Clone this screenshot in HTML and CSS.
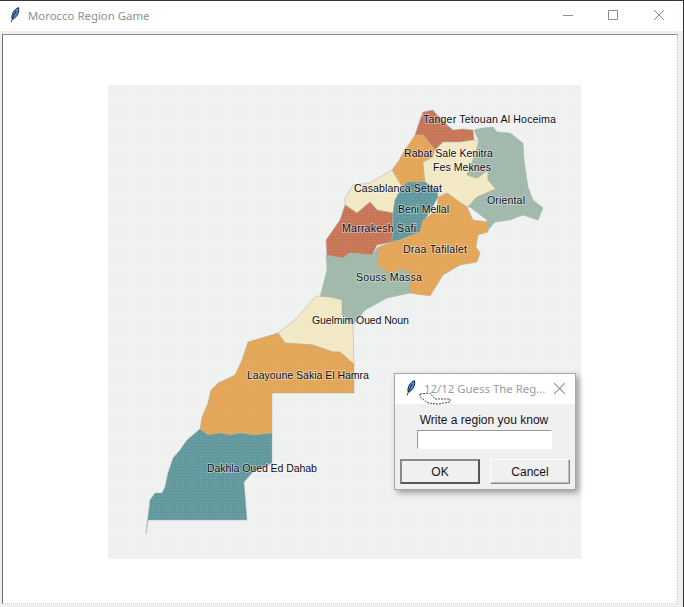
FILE: index.html
```html
<!DOCTYPE html>
<html lang="en">
<head>
<meta charset="utf-8">
<title>Morocco Region Game</title>
<link rel="stylesheet" href="styles.css">
</head>
<body>
<div class="window">
  <header class="titlebar">
    <svg class="feather" viewBox="0 0 10 16" width="10" height="16">
      <path class="feather-body" d="M2 11.5 C1.5 7 4 2.5 8.5 .6 C9.5 4 7.5 9.5 3.4 12 Z"/>
      <path class="feather-line" d="M1.2 15.4 L2.6 11 L6.2 4"/>
    </svg>
    <span class="title">Morocco Region Game</span>
    <div class="controls">
      <svg class="ctl" viewBox="0 0 10 10" width="10" height="10"><path d="M0 5.5H10"/></svg>
      <svg class="ctl" viewBox="0 0 10 10" width="10" height="10"><path d="M.5 .5H9.5V9.5H.5Z"/></svg>
      <svg class="ctl ctl-close" viewBox="0 0 10 10" width="10" height="10"><path d="M0 0L10 10M10 0L0 10"/></svg>
    </div>
  </header>
  <main class="canvas">
    <svg class="map" viewBox="108 85 473 474" width="473" height="474">
      <defs>
        <pattern id="dither" x="0" y="0" width="3" height="3" patternUnits="userSpaceOnUse">
          <rect class="dither-dot" x="0" y="0" width="1" height="1"/>
          <rect class="dither-dot" x="2" y="1" width="1" height="1"/>
        </pattern>
      </defs>
      <rect class="sea" x="108" y="85" width="473" height="474"/>
      <g class="regions">
        <path class="terra" d="M423 112L433 110L437 115L440 117L447 125L453 130L462 129L473 130L474 140L460 142L443 142L435 150L423 135L415 135L420 120Z"/>
        <path class="orange" d="M415 135L423 135L435 150L433 157L423 162L425 170L427 182L415 182L408 182L402 187L392 170L398 162L403 153Z"/>
        <path class="cream" d="M435 150L443 142L460 142L474 140L479 141L475 155L467 175L477 178L488 170L488 180L496 189L477 197L468 207L460 203L447 193L438 197L437 190L425 182L423 162L433 157Z"/>
        <path class="sage" d="M474 130L483 128L493 127L497 132L510 133L523 143L524 160L528 187L533 200L543 208L538 220L523 215L510 220L495 222L488 230L487 220L470 207L468 207L477 197L496 189L488 180L488 170L477 178L467 175L475 155L479 141Z"/>
        <path class="cream" d="M345 198L353 185L370 183L392 170L402 187L395 200L393 213L377 210L370 202L357 213L345 205Z"/>
        <path class="terra" d="M345 205L357 213L370 202L377 210L393 213L392 242L377 245L372 255L350 253L343 258L327 257L326 240L333 230L340 220Z"/>
        <path class="teal" d="M393 213L395 200L402 187L408 182L425 182L437 190L438 197L431 210L423 222L420 232L400 240L392 242Z"/>
        <path class="orange" d="M423 220L437 210L438 198L447 193L467 207L473 220L488 222L488 232L478 235L476 247L480 253L477 262L460 265L443 275L430 296L410 293L410 280L407 270L390 273L378 267L378 247L392 242L400 240L420 232Z"/>
        <path class="sage" d="M326 255L343 258L350 253L372 255L378 247L378 267L390 273L407 269L410 280L410 293L387 298L365 310L353 325L342 315L342 300L330 297L320 297L327 270Z"/>
        <path class="cream" d="M316 296L330 297L342 300L342 315L353 325L354 365L340 352L333 352L313 345L285 343L278 333L295 320Z"/>
        <path class="orange" d="M278 333L285 343L313 345L333 352L340 352L354 364L354 393L272 393L272 433L255 435L240 433L230 435L208 435L200 429L202 417L208 403L211 390L218 383L235 375L242 360L248 342Z"/>
        <path class="teal" d="M200 429L208 435L220 433L230 435L240 433L255 435L272 433L272 463L253 472L244 482L247 520L148 520L146 534L150 500L155 493L162 493L165 487L168 473L173 458L180 450L187 440Z"/>
      </g>
      <rect class="dither" x="108" y="85" width="473" height="474" fill="url(#dither)"/>
      <g class="labels">
        <text x="423" y="123" textLength="133">Tanger Tetouan Al Hoceima</text>
        <text x="404" y="157" textLength="89">Rabat Sale Kenitra</text>
        <text x="433" y="171" textLength="58">Fes Meknes</text>
        <text x="354" y="192" textLength="88">Casablanca Settat</text>
        <text x="487" y="204" textLength="38">Oriental</text>
        <text x="398" y="213" textLength="51">Beni Mellal</text>
        <text x="342" y="232" textLength="74">Marrakesh Safi</text>
        <text x="403" y="253" textLength="64">Draa Tafilalet</text>
        <text x="356" y="281" textLength="66">Souss Massa</text>
        <text x="312" y="324" textLength="97">Guelmim Oued Noun</text>
        <text x="247" y="379" textLength="122">Laayoune Sakia El Hamra</text>
        <text x="207" y="472" textLength="110">Dakhla Oued Ed Dahab</text>
      </g>
    </svg>
    <section class="dialog">
      <header class="dialog-bar">
        <svg class="feather" viewBox="0 0 10 16" width="10" height="16">
          <path class="feather-body" d="M2 11.5 C1.5 7 4 2.5 8.5 .6 C9.5 4 7.5 9.5 3.4 12 Z"/>
          <path class="feather-line" d="M1.2 15.4 L2.6 11 L6.2 4"/>
        </svg>
        <span class="dialog-title">12/12 Guess The Reg...</span>
        <svg class="dialog-close" viewBox="0 0 10 10" width="11" height="11"><path d="M0 0L10 10M10 0L0 10"/></svg>
        <svg class="scribble" viewBox="0 0 34 12" width="34" height="12"><path d="M2 1L12 0L17 6L32 6L32 9L20 11L10 10L2 4Z"/></svg>
      </header>
      <div class="dialog-body">
        <label class="prompt" for="region">Write a region you know</label>
        <input class="entry" id="region" type="text">
        <div class="buttons">
          <button class="btn btn-default" type="button">OK</button>
          <button class="btn" type="button">Cancel</button>
        </div>
      </div>
    </section>
  </main>
</div>
</body>
</html>
```
FILE: styles.css
```css
* { box-sizing: border-box; }
html, body { margin: 0; padding: 0; background: #f0f0f0; }
.window {
  width: 684px;
  height: 607px;
  display: flex;
  flex-direction: column;
  border-top: 1px solid #33393a;
  border-right: 1px solid #2b3033;
  overflow: hidden;
}
.titlebar {
  height: 30px;
  flex: none;
  background: #fff;
  display: flex;
  align-items: center;
  padding: 0 0 2px 10px;
}
.feather { flex: none; }
.feather-body { fill: #4b8fd8; stroke: #14233a; stroke-width: 1; }
.feather-line { fill: none; stroke: #10151c; stroke-width: .8; }
.title {
  margin-left: 8px;
  font: 11.4px "Noto Sans", sans-serif;
  color: #8f8f96;
}
.controls {
  margin-left: auto;
  margin-right: 19px;
  display: flex;
  gap: 35px;
}
.ctl { display: block; }
.ctl-close { margin-left: 1px; }
.ctl path { fill: none; stroke: #8e8e8e; stroke-width: 1; }
.canvas {
  position: relative;
  flex: 1;
  margin: 3px 5px 3px 2px;
  padding: 50px 0 0 105px;
  background: #fff;
  border-top: 1px solid #8c8c8c;
  border-left: 1px solid #6e6e6e;
  border-right: 1px dotted #bbb;
  border-bottom: 1px dotted #ccc;
}
.map { display: block; }
.sea { fill: #eff1f1; }
.dither-dot { fill: #fff; fill-opacity: .12; }
.regions path { stroke: #a9aaa3; stroke-width: .5; stroke-linejoin: round; }
.terra { fill: #c67454; }
.orange { fill: #e3a555; }
.cream { fill: #f3e8c4; }
.sage { fill: #9fb8a9; }
.teal { fill: #60979c; }
.labels text {
  font: 10.6px "Liberation Sans", sans-serif;
  fill: #0c0c14;
  stroke: #fff;
  stroke-width: 1.4px;
  stroke-opacity: .5;
  paint-order: stroke;
}
.dialog {
  position: absolute;
  left: 391px;
  top: 338px;
  width: 182px;
  height: 117px;
  background: #f0f0f0;
  border: 1px solid #a8a8a8;
  box-shadow: 3px 3px 6px rgba(0, 0, 0, .35);
  display: flex;
  flex-direction: column;
}
.dialog-bar {
  position: relative;
  height: 30px;
  flex: none;
  background: #fff;
  display: flex;
  align-items: center;
  padding: 0 0 2px 11px;
}
.dialog-title {
  margin-left: 8px;
  font: 11.4px "Noto Sans", sans-serif;
  color: #9a9aa2;
}
.dialog-close { margin-left: auto; margin-right: 10px; }
.dialog-close path { fill: none; stroke: #8e8e8e; stroke-width: 1; }
.scribble { position: absolute; left: 23px; top: 19px; }
.scribble path { fill: #fff; stroke: #222; stroke-width: .8; stroke-dasharray: 2 1; }
.dialog-body {
  flex: 1;
  display: flex;
  flex-direction: column;
  align-items: center;
  padding: 9px 5px 0;
}
.prompt {
  font: 12px "Liberation Sans", sans-serif;
  color: #14141c;
  line-height: 15px;
  margin-left: -2px;
}
.entry {
  width: 135px;
  height: 19px;
  margin: 2px 0 0 -2px;
  padding: 0;
  background: #fff;
  border: 1px solid #c8c8c8;
  border-top-color: #9a9a9a;
  border-left-color: #9a9a9a;
  border-right-color: #fff;
  border-bottom-color: #fff;
}
.buttons {
  align-self: stretch;
  display: flex;
  justify-content: space-between;
  margin-top: 10px;
}
.btn {
  width: 80px;
  height: 25px;
  padding: 0;
  font: 12px "Liberation Sans", sans-serif;
  color: #14141c;
  background: #f0f0f0;
  border: 1px solid;
  border-color: #fff #8a8a8a #8a8a8a #fff;
  box-shadow: inset -1px -1px 0 #bdbdbd;
}
.btn-default {
  border: 2px solid;
  border-color: #8a8a8a #55555a #55555a #8a8a8a;
  box-shadow: none;
}
```
